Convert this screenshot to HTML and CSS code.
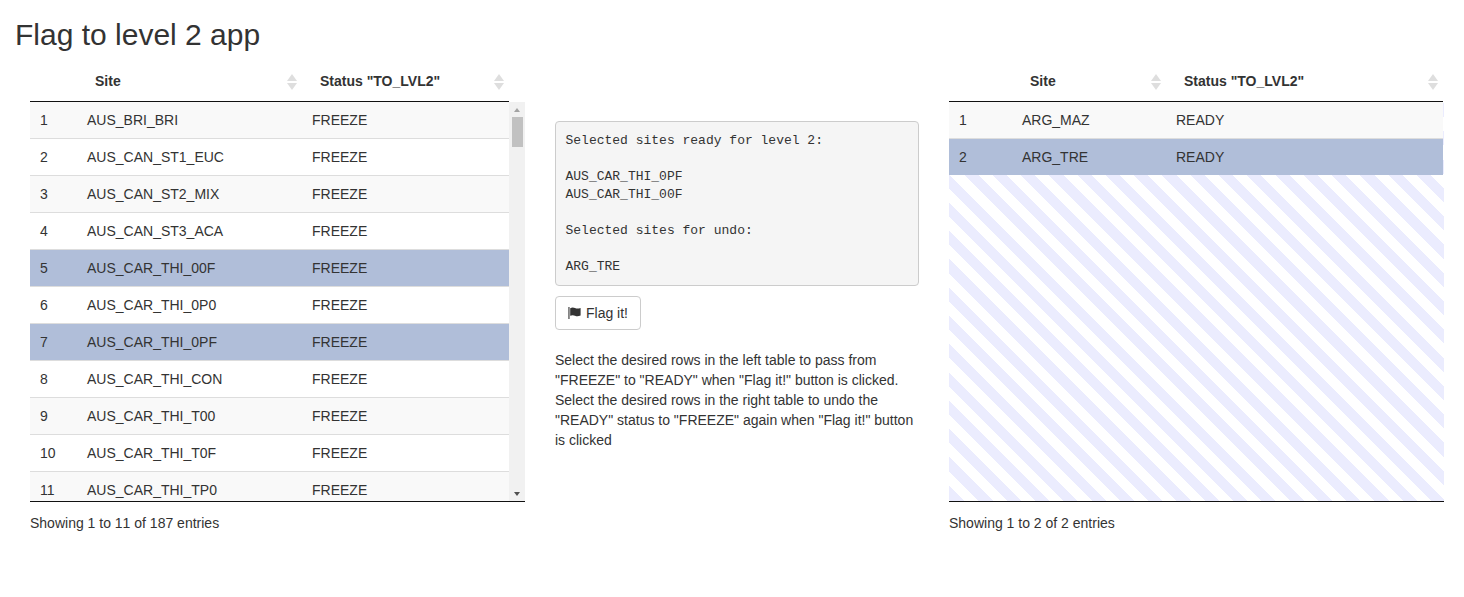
FILE: index.html
```html
<!DOCTYPE html>
<html lang="en">
<head>
<meta charset="utf-8">
<title>Flag to level 2 app</title>
<link rel="stylesheet" href="styles.css">
</head>
<body>
<h2 class="title">Flag to level 2 app</h2>
<main class="layout">
  <section class="dt">
    <div class="dt-head left-cols">
      <div class="th"></div>
      <div class="th th-site">Site<span class="sort"></span></div>
      <div class="th th-status">Status "TO_LVL2"<span class="sort"></span></div>
    </div>
    <div class="dt-body">
      <div class="rows">
        <div class="row odd left-cols"><span>1</span><span>AUS_BRI_BRI</span><span>FREEZE</span></div>
        <div class="row left-cols"><span>2</span><span>AUS_CAN_ST1_EUC</span><span>FREEZE</span></div>
        <div class="row odd left-cols"><span>3</span><span>AUS_CAN_ST2_MIX</span><span>FREEZE</span></div>
        <div class="row left-cols"><span>4</span><span>AUS_CAN_ST3_ACA</span><span>FREEZE</span></div>
        <div class="row selected left-cols"><span>5</span><span>AUS_CAR_THI_00F</span><span>FREEZE</span></div>
        <div class="row left-cols"><span>6</span><span>AUS_CAR_THI_0P0</span><span>FREEZE</span></div>
        <div class="row selected left-cols"><span>7</span><span>AUS_CAR_THI_0PF</span><span>FREEZE</span></div>
        <div class="row left-cols"><span>8</span><span>AUS_CAR_THI_CON</span><span>FREEZE</span></div>
        <div class="row odd left-cols"><span>9</span><span>AUS_CAR_THI_T00</span><span>FREEZE</span></div>
        <div class="row left-cols"><span>10</span><span>AUS_CAR_THI_T0F</span><span>FREEZE</span></div>
        <div class="row odd left-cols"><span>11</span><span>AUS_CAR_THI_TP0</span><span>FREEZE</span></div>
      </div>
      <div class="scrollbar">
        <span class="arrow arrow-up"></span>
        <span class="thumb"></span>
        <span class="arrow arrow-down"></span>
      </div>
    </div>
    <p class="info">Showing 1 to 11 of 187 entries</p>
  </section>

  <section class="middle">
    <pre class="output">Selected sites ready for level 2:

AUS_CAR_THI_0PF
AUS_CAR_THI_00F

Selected sites for undo:

ARG_TRE</pre>
    <button class="btn" type="button">
      <svg class="flag" viewBox="0 0 14 12" aria-hidden="true"><path d="M0.4 0h1.1v12H0.4z"/><path d="M2.2 1.2C4 .2 5.4.3 7 1c1.6.7 3.2.8 5.6-.1v7.6c-2.3 1-4 .9-5.6.2-1.6-.7-3-.8-4.8.1z"/></svg>
      Flag it!
    </button>
    <p class="help">Select the desired rows in the left table to pass from "FREEZE" to "READY" when "Flag it!" button is clicked. Select the desired rows in the right table to undo the "READY" status to "FREEZE" again when "Flag it!" button is clicked</p>
  </section>

  <section class="dt">
    <div class="dt-head right-cols">
      <div class="th"></div>
      <div class="th th-site">Site<span class="sort"></span></div>
      <div class="th th-status">Status "TO_LVL2"<span class="sort"></span></div>
    </div>
    <div class="dt-body stripes">
      <div class="rows">
        <div class="row odd right-cols"><span>1</span><span>ARG_MAZ</span><span>READY</span></div>
        <div class="row selected right-cols"><span>2</span><span>ARG_TRE</span><span>READY</span></div>
      </div>
    </div>
    <p class="info">Showing 1 to 2 of 2 entries</p>
  </section>
</main>
</body>
</html>
```
FILE: styles.css
```css
* { box-sizing: border-box; }
html, body { margin: 0; height: 100%; overflow: hidden; }
body {
  background: #fff;
  color: #333;
  font-family: "Liberation Sans", Arial, sans-serif;
  font-size: 14px;
  line-height: 20px;
}
.title {
  margin: 0;
  padding: 18px 0 0 15px;
  font-size: 30px;
  font-weight: 500;
  line-height: 33px;
  height: 62px;
}
.layout {
  display: grid;
  grid-template-columns: 495px 364px 495px;
  column-gap: 30px;
  padding-left: 30px;
}
.dt { min-width: 0; }
.left-cols { display: grid; grid-template-columns: 47px 225px 207px; width: 479px; }
.right-cols { display: grid; grid-template-columns: 63px 154px 277px; width: 494px; }
.dt-head { height: 40px; border-bottom: 1px solid #111; }
.th { position: relative; font-weight: 700; line-height: 38px; }
.th-site, .th-status { padding-left: 18px; }
.sort {
  position: absolute;
  right: 5px;
  top: 12px;
  width: 10px;
  height: 16px;
}
.sort::before, .sort::after {
  content: "";
  position: absolute;
  left: 0;
  border-left: 5px solid transparent;
  border-right: 5px solid transparent;
}
.sort::before { top: 0; border-bottom: 7px solid #dedede; }
.sort::after { bottom: 0; border-top: 7px solid #dedede; }

.dt-body {
  position: relative;
  height: 400px;
  overflow: hidden;
  border-bottom: 1px solid #111;
}
.stripes {
  background: repeating-linear-gradient(45deg,
    #fff 0, #fff 1.13px,
    #ebecfe 1.13px, #ebecfe 11.13px,
    #fff 11.13px, #fff 20px);
}
.row {
  height: 37px;
  line-height: 36px;
  border-top: 1px solid #ddd;
  background: #fff;
}
.row span { padding-left: 10px; white-space: nowrap; }
.row:first-child { border-top: 0; height: 36px; }
.row.odd { background: #f9f9f9; }
.row.selected { background: #b0bed9; }

.scrollbar {
  position: absolute;
  top: 0;
  right: 0;
  bottom: 0;
  width: 16px;
  background: #f1f1f1;
}
.thumb {
  position: absolute;
  left: 3px;
  top: 15px;
  width: 11px;
  height: 30px;
  background: #c1c1c1;
}
.arrow {
  position: absolute;
  left: 5px;
  border-left: 3.5px solid transparent;
  border-right: 3.5px solid transparent;
}
.arrow-up { top: 6px; border-bottom: 4px solid #a3a3a3; }
.arrow-down { bottom: 5px; border-top: 4px solid #505050; }

.info { margin: 0; padding-top: 11px; font-kerning: none; }

.middle { padding-top: 59px; min-width: 0; }
.output {
  margin: 0;
  height: 165px;
  padding: 9.5px;
  font-family: "Liberation Mono", "Courier New", monospace;
  font-size: 13px;
  line-height: 18px;
  color: #333;
  background: #f5f5f5;
  border: 1px solid #ccc;
  border-radius: 4px;
  white-space: pre-wrap;
}
.btn {
  display: inline-flex;
  align-items: center;
  gap: 4px;
  height: 34px;
  margin-top: 10px;
  padding: 0 12px;
  font: inherit;
  color: #333;
  background: #fff;
  border: 1px solid #ccc;
  border-radius: 4px;
}
.flag { width: 14px; height: 12px; fill: #333; }
.help { margin: 20px 0 0; }
```
